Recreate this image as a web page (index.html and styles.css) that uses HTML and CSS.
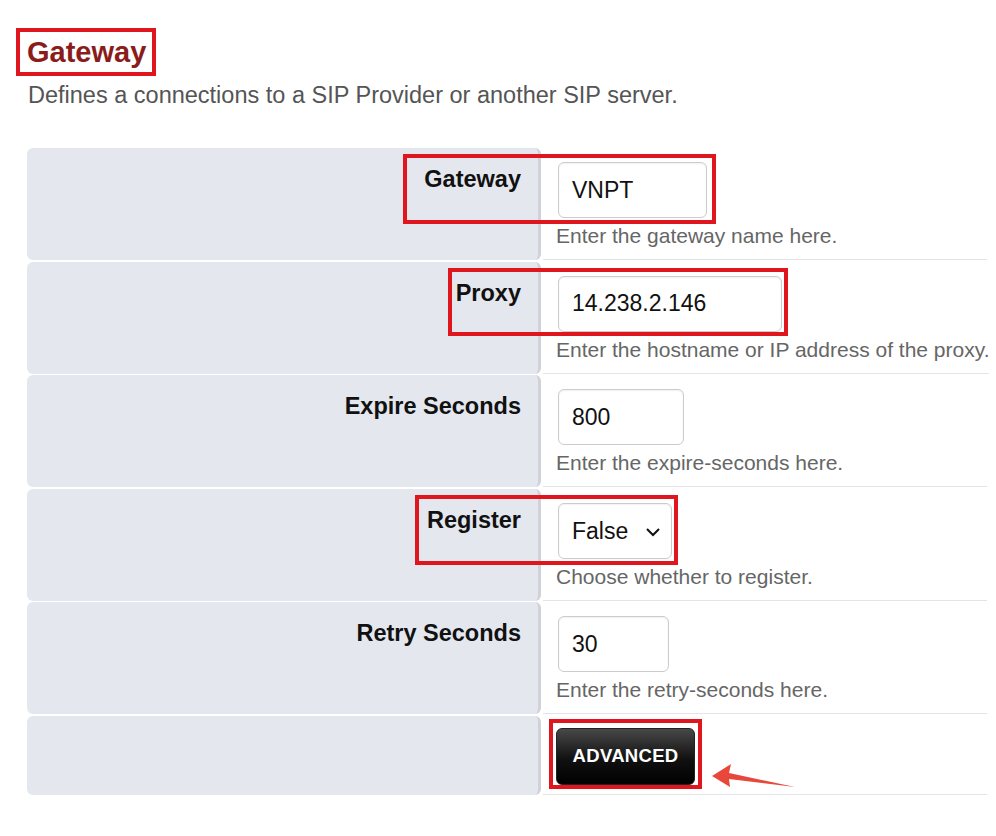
FILE: index.html
```html
<!DOCTYPE html>
<html lang="en">
<head>
    <meta charset="UTF-8">
    <meta name="viewport" content="width=device-width, initial-scale=1.0">
    <title>Gateway</title>
    <link rel="stylesheet" href="styles.css">
</head>
<body>
    <div class="page">
        <h1 class="title">Gateway</h1>
        <p class="intro">Defines a connections to a SIP Provider or another SIP server.</p>

        <div class="form">
            <div class="row">
                <div class="label">Gateway</div>
                <div class="field">
                    <input type="text" class="input w-name" value="VNPT">
                    <div class="help">Enter the gateway name here.</div>
                </div>
            </div>
            <div class="row">
                <div class="label">Proxy</div>
                <div class="field">
                    <input type="text" class="input w-proxy" value="14.238.2.146">
                    <div class="help">Enter the hostname or IP address of the proxy.</div>
                </div>
            </div>
            <div class="row">
                <div class="label">Expire Seconds</div>
                <div class="field">
                    <input type="text" class="input w-expire" value="800">
                    <div class="help">Enter the expire-seconds here.</div>
                </div>
            </div>
            <div class="row">
                <div class="label">Register</div>
                <div class="field">
                    <div class="select-wrap">
                        <select class="input select">
                            <option>False</option>
                            <option>True</option>
                        </select>
                        <svg class="chevron" width="16" height="10" viewBox="0 0 16 10"><path d="M2 2 L8 8 L14 2" fill="none" stroke="#111" stroke-width="2"/></svg>
                    </div>
                    <div class="help">Choose whether to register.</div>
                </div>
            </div>
            <div class="row">
                <div class="label">Retry Seconds</div>
                <div class="field">
                    <input type="text" class="input w-retry" value="30">
                    <div class="help">Enter the retry-seconds here.</div>
                </div>
            </div>
            <div class="row row-last">
                <div class="label"></div>
                <div class="field">
                    <button class="btn">ADVANCED</button>
                </div>
            </div>
        </div>

        <!-- annotation marks -->
        <div class="mark mark-gateway"></div>
        <div class="mark mark-proxy"></div>
        <div class="mark mark-register"></div>
        <div class="mark mark-button"></div>
        <svg class="arrow" width="95" height="35" viewBox="0 0 95 35">
            <polygon points="7,18 26,6 24,15 90,29 24,21 25,29" fill="#e8483b"/>
        </svg>
    </div>
</body>
</html>
```

FILE: styles.css
```css
* {
    box-sizing: border-box;
}
body {
    margin: 0;
    font-family: "Liberation Sans", Arial, sans-serif;
    background-color: #fff;
    color: #111;
}
.page {
    position: relative;
    width: 996px;
    height: 836px;
    overflow: hidden;
}
.title {
    width: fit-content;
    margin: 28px 0 0 16px;
    padding: 4px 6px 3px 7px;
    border: 4px solid #e0161f;
    color: #8a1c1c;
    font-size: 29px;
    font-weight: bold;
    line-height: normal;
}
.intro {
    margin: 6px 0 0 28px;
    font-size: 23.5px;
    line-height: 27px;
    color: #555;
}
.form {
    margin: 39px 0 0 27px;
    width: 960px;
    display: flex;
    flex-direction: column;
    gap: 1.6px;
}
.row {
    display: flex;
    height: 112px;
}
.row-last {
    height: 79px;
}
.label {
    width: 514px;
    flex-shrink: 0;
    padding: 17px 17px 0 0;
    background-color: #e4e8ee;
    border-right: 3px solid #cfd3d9;
    border-radius: 6px;
    text-align: right;
    font-size: 23.5px;
    font-weight: bold;
    line-height: 1.2;
    color: #111;
}
.field {
    flex: 1;
    margin-left: 2px;
    padding: 14px 0 0 15px;
    border-bottom: 1px solid #e4e4e4;
    white-space: nowrap;
}
.row-last .field {
    padding-top: 12px;
}
.input {
    display: block;
    height: 56px;
    padding: 0 13px;
    border: 1px solid #ccc;
    border-radius: 6px;
    background-color: #fff;
    box-shadow: inset 0 1px 2px rgba(0, 0, 0, 0.06);
    font-family: "Liberation Sans", Arial, sans-serif;
    font-size: 23px;
    color: #111;
}
.w-name {
    width: 149px;
}
.w-proxy {
    width: 224px;
}
.w-expire {
    width: 126px;
}
.w-retry {
    width: 111px;
}
.select-wrap {
    position: relative;
    width: 114px;
}
.select {
    width: 114px;
    appearance: none;
    -webkit-appearance: none;
    padding-right: 36px;
}
.chevron {
    position: absolute;
    right: 11px;
    top: 24px;
}
.help {
    margin: 6px 0 0 -2px;
    font-size: 21px;
    line-height: 24px;
    color: #666;
}
.btn {
    display: block;
    width: 139px;
    height: 57px;
    margin-left: -2px;
    padding: 0;
    border: 1px solid #222;
    border-radius: 6px;
    background: linear-gradient(#484848, #111 55%, #000);
    color: #fff;
    font-family: "Liberation Sans", Arial, sans-serif;
    font-size: 18.5px;
    font-weight: bold;
    letter-spacing: 0.3px;
    cursor: pointer;
}
.mark {
    position: absolute;
    border: 4px solid #e0161f;
}
.mark-gateway {
    left: 403px;
    top: 154px;
    width: 313px;
    height: 70px;
}
.mark-proxy {
    left: 448px;
    top: 268px;
    width: 340px;
    height: 68px;
}
.mark-register {
    left: 415px;
    top: 495px;
    width: 263px;
    height: 70px;
}
.mark-button {
    left: 549px;
    top: 719px;
    width: 153px;
    height: 70px;
}
.arrow {
    position: absolute;
    left: 705px;
    top: 758px;
}
```
